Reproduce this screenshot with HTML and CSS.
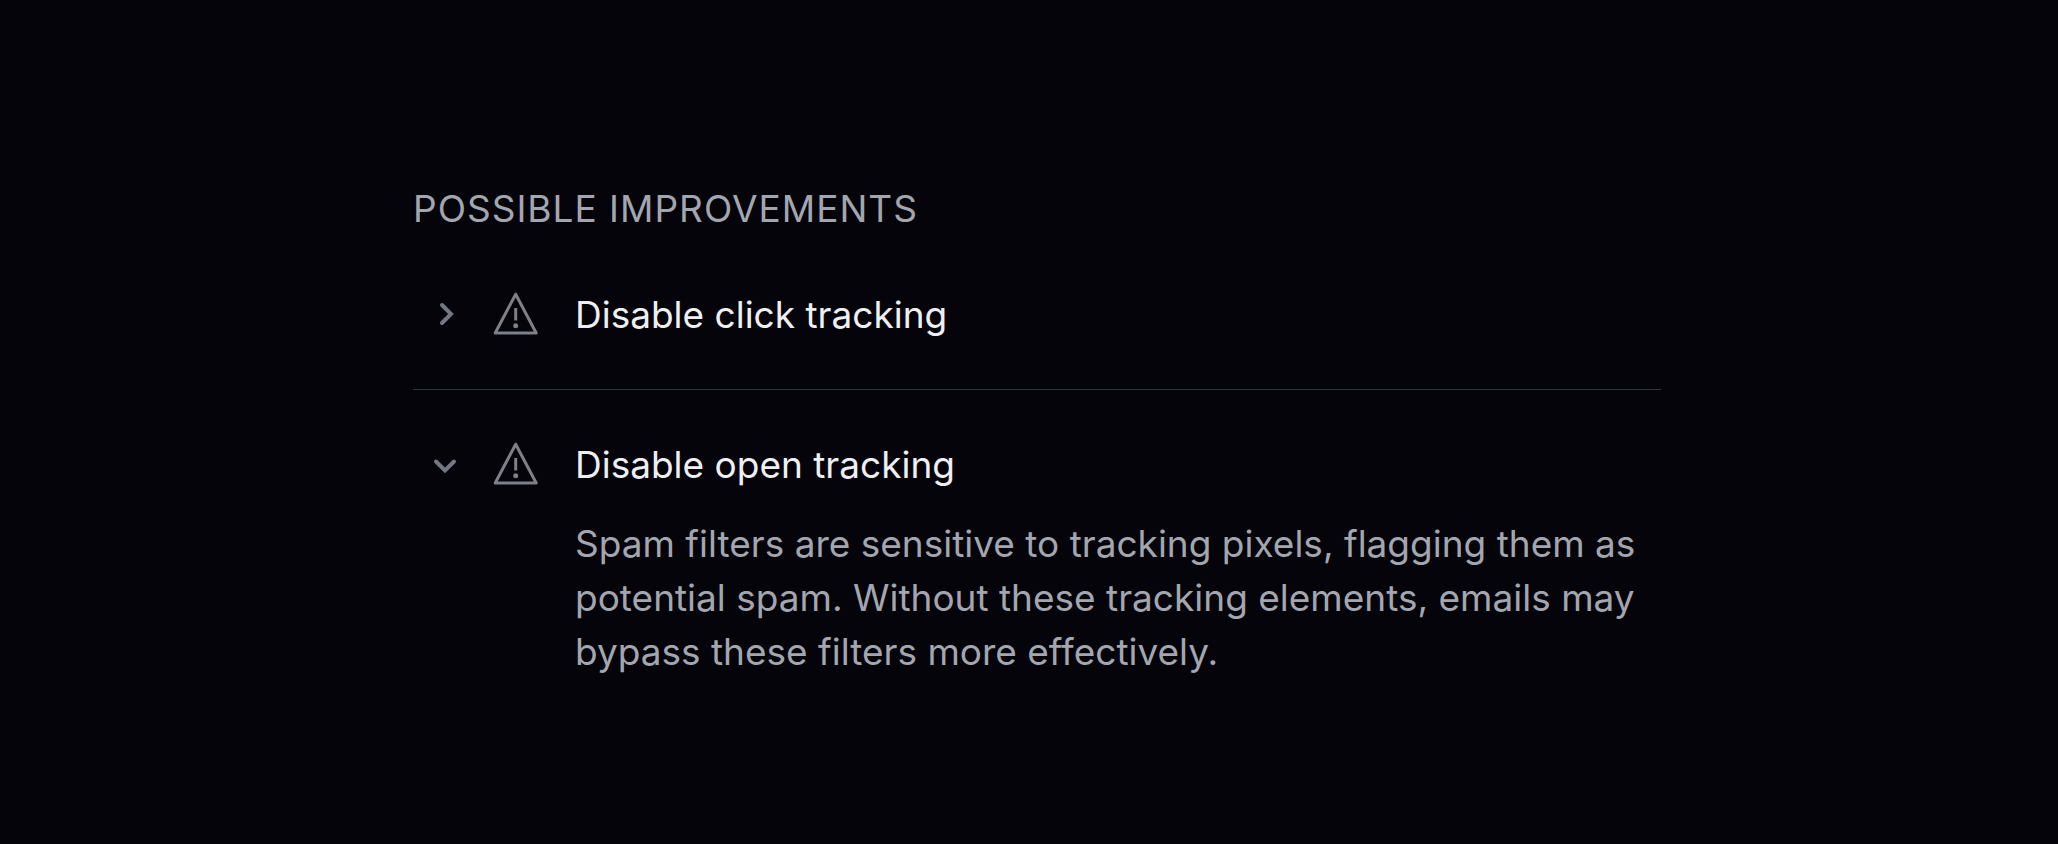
FILE: index.html
```html
<!DOCTYPE html>
<html lang="en">
<head>
<meta charset="utf-8">
<meta name="viewport" content="width=device-width, initial-scale=1">
<title>Possible improvements</title>
<link rel="stylesheet" href="styles.css">
</head>
<body>
<main class="panel">
  <h2 class="heading">POSSIBLE IMPROVEMENTS</h2>
  <section class="item">
    <button class="toggle" type="button" aria-expanded="false">
      <svg class="chevron" viewBox="0 0 32 32" aria-hidden="true"><path d="M13 6l9 9-9 9"/></svg>
      <svg class="warning" viewBox="0 0 48 48" aria-hidden="true"><path d="M24.700 3.200L45.200 42H4.200Z"/><path d="M24.700 17v12.500"/><circle cx="24.700" cy="34.700" r="2.500"/></svg>
      <span class="title">Disable click tracking</span>
    </button>
  </section>
  <section class="item">
    <button class="toggle" type="button" aria-expanded="true" aria-controls="open-tracking">
      <svg class="chevron" viewBox="0 0 32 32" aria-hidden="true"><path d="M7 12.500l9 9 9-9"/></svg>
      <svg class="warning" viewBox="0 0 48 48" aria-hidden="true"><path d="M24.700 3.200L45.200 42H4.200Z"/><path d="M24.700 17v12.500"/><circle cx="24.700" cy="34.700" r="2.500"/></svg>
      <span class="title">Disable open tracking</span>
    </button>
    <p class="detail" id="open-tracking">Spam filters are sensitive to tracking pixels, flagging them as potential spam. Without these tracking elements, emails may bypass these filters more effectively.</p>
  </section>
</main>
</body>
</html>
```
FILE: styles.css
```css
* { box-sizing: border-box; }

body {
  margin: 0;
  padding: 182px 0 0 16px;
  background: #04040a;
  color: #eeeff2;
  font-family: Inter, sans-serif;
  font-optical-sizing: none;
  font-size: 37px;
  line-height: 54px;
}

.panel {
  max-width: 1248px;
  margin: 0 auto;
}

.heading {
  margin: 0 0 28px;
  color: #a3a6ae;
  font-size: inherit;
  font-weight: 400;
  letter-spacing: 1px;
}

.item {
  padding: 24px 0 47px;
}

.item + .item {
  padding-top: 48px;
  border-top: 1px solid #2f3639;
}

.toggle {
  display: flex;
  align-items: center;
  width: 100%;
  padding: 0 0 0 16px;
  border: 0;
  background: none;
  color: inherit;
  font: inherit;
  font-optical-sizing: none;
  text-align: left;
}

.chevron,
.warning {
  flex: none;
  fill: none;
  stroke: #7f8087;
  stroke-width: 3;
}

.chevron {
  width: 32px;
  height: 32px;
  stroke: #747783;
  stroke-width: 4;
  stroke-linecap: round;
}

.warning {
  width: 48px;
  height: 48px;
  margin: 0 36px 0 30px;
  stroke-linejoin: round;
}

.warning circle {
  fill: #7f8087;
  stroke: none;
}

.detail {
  margin: 25px 0 0 162px;
  color: #a3a6ae;
}
```
